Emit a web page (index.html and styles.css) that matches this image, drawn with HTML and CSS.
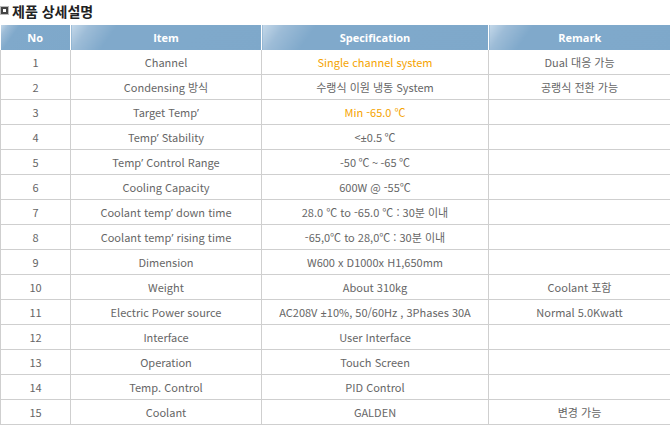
FILE: index.html
```html
<!DOCTYPE html>
<html lang="ko">
<head>
<meta charset="utf-8">
<link rel="stylesheet" href="styles.css">
</head>
<body>
<div class="title"><span class="bullet"></span><span class="title-text">제품 상세설명</span></div>
<table class="spec">
  <colgroup><col class="c1"><col class="c2"><col class="c3"><col class="c4"></colgroup>
  <thead>
    <tr><th>No</th><th>Item</th><th>Specification</th><th>Remark</th></tr>
  </thead>
  <tbody>
    <tr><td>1</td><td>Channel</td><td class="hl">Single channel system</td><td>Dual 대응 가능</td></tr>
    <tr><td>2</td><td>Condensing 방식</td><td>수랭식 이원 냉동 System</td><td>공랭식 전환 가능</td></tr>
    <tr><td>3</td><td>Target Temp<span class="ap">’</span></td><td class="hl">Min -65.0 ℃</td><td></td></tr>
    <tr><td>4</td><td>Temp<span class="ap">’</span> Stability</td><td>&lt;<span class="ap">±</span>0.5 ℃</td><td></td></tr>
    <tr><td>5</td><td>Temp<span class="ap">’</span> Control Range</td><td>-50 ℃ ~ -65 ℃</td><td></td></tr>
    <tr><td>6</td><td>Cooling Capacity</td><td>600W @ -55℃</td><td></td></tr>
    <tr><td>7</td><td>Coolant temp<span class="ap">’</span> down time</td><td>28.0 ℃ to -65.0 ℃ : 30분 이내</td><td></td></tr>
    <tr><td>8</td><td>Coolant temp<span class="ap">’</span> rising time</td><td>-65,0℃ to 28,0℃ : 30분 이내</td><td></td></tr>
    <tr><td>9</td><td>Dimension</td><td>W600 x D1000x H1,650mm</td><td></td></tr>
    <tr><td>10</td><td>Weight</td><td>About 310kg</td><td>Coolant 포함</td></tr>
    <tr><td>11</td><td>Electric Power source</td><td>AC208V <span class="ap">±</span>10%, 50/60Hz , 3Phases 30A</td><td>Normal 5.0Kwatt</td></tr>
    <tr><td>12</td><td>Interface</td><td>User Interface</td><td></td></tr>
    <tr><td>13</td><td>Operation</td><td>Touch Screen</td><td></td></tr>
    <tr><td>14</td><td>Temp. Control</td><td>PID Control</td><td></td></tr>
    <tr><td>15</td><td>Coolant</td><td>GALDEN</td><td>변경 가능</td></tr>
  </tbody>
</table>
</body>
</html>
```
FILE: styles.css
```css
html, body { margin: 0; padding: 0; background: #fff; }
body { width: 670px; font-family: "Noto Sans CJK KR", "Noto Sans", sans-serif; }
.title {
  height: 25px;
  display: flex;
  align-items: center;
  gap: 4px;
  padding-left: 1px;
  padding-bottom: 4px;
  box-sizing: border-box;
}
.title-text {
  font-size: 14px;
  font-weight: bold;
  color: #222;
  line-height: 20px;
}
.bullet {
  width: 3px; height: 3px;
  border: 2px solid #444;
  outline: 1px solid #bbb;
  background: #fff;
  flex: none;
}
.spec {
  width: 670px;
  border-collapse: collapse;
  table-layout: fixed;
  font-size: 11px;
  color: #666;
}
.c1 { width: 70px; }
.c2 { width: 191px; }
.c3 { width: 227px; }
.c4 { width: 182px; }
.spec th {
  height: 25px;
  padding: 0;
  border-left: 1px solid #fff;
  color: #fff;
  font-family: "Open Sans", sans-serif;
  font-weight: bold;
  font-size: 11px;
  background: linear-gradient(125deg, #c4d8e9 0%, #9dbcd7 9%, #80a9cb 22%, #7ea8ca 100%);
}
.spec th:first-child { border-left: none; }
.spec td {
  height: 24px;
  padding: 0;
  text-align: center;
  border: 1px solid #cfcfcf;
  border-top: none;
}
.spec td.hl { color: #f5a300; }
.ap { font-family: "Noto Sans", sans-serif; }
```
